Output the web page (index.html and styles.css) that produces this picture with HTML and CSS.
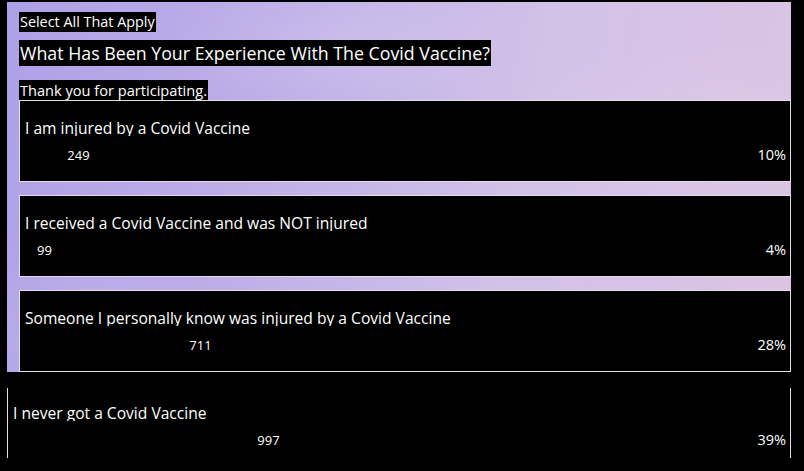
FILE: index.html
```html
<!DOCTYPE html>
<html lang="en">
<head>
  <meta charset="UTF-8" />
  <meta name="viewport" content="width=device-width, initial-scale=1.0" />
  <title>Covid Vaccine Poll</title>
  <link rel="stylesheet" href="styles.css">
</head>
<body>
  <div class="poll">
    <div class="poll-head">
      <span class="tag">Select All That Apply</span>
      <span class="question">What Has Been Your Experience With The Covid Vaccine?</span>
      <span class="note">Thank you for participating.</span>
    </div>
    <div class="answers">
      <div class="answer">
        <div class="answer-label">I am injured by a Covid Vaccine</div>
        <div class="answer-row">
          <span class="answer-bar" style="width:107px">249</span>
          <span class="answer-pct">10%</span>
        </div>
      </div>
      <div class="answer">
        <div class="answer-label">I received a Covid Vaccine and was NOT injured</div>
        <div class="answer-row">
          <span class="answer-bar" style="width:39px">99</span>
          <span class="answer-pct">4%</span>
        </div>
      </div>
      <div class="answer">
        <div class="answer-label">Someone I personally know was injured by a Covid Vaccine</div>
        <div class="answer-row">
          <span class="answer-bar" style="width:351px">711</span>
          <span class="answer-pct">28%</span>
        </div>
      </div>
    </div>
  </div>
  <div class="answer answer-loose">
    <div class="answer-label">I never got a Covid Vaccine</div>
    <div class="answer-row">
      <span class="answer-bar" style="width:511px">997</span>
      <span class="answer-pct">39%</span>
    </div>
  </div>
</body>
</html>
```

FILE: styles.css
```css
* { margin: 0; padding: 0; box-sizing: border-box; }
html, body {
  width: 100%; height: 100%; overflow: hidden;
  background: #000; color: #fff;
  font-family: 'Open Sans', 'Noto Sans', sans-serif;
}
body { padding: 2px 13px 0 7px; }

.poll {
  padding: 10px 0 0 12px;
  background:
    radial-gradient(ellipse 260px 90px at 330px 40px, rgba(255,255,255,0.12), transparent 70%),
    radial-gradient(ellipse 300px 120px at 700px 120px, rgba(255,255,255,0.08), transparent 70%),
    radial-gradient(ellipse 220px 140px at 60px 330px, rgba(255,255,255,0.10), transparent 70%),
    linear-gradient(100deg, #aea0e6 0%, #bfb0e8 35%, #d2c2e8 65%, #dcc3e3 100%);
}
.poll-head { display: flex; flex-direction: column; align-items: flex-start; }
.tag, .question, .note { background: #000; padding: 0 1px; white-space: nowrap; }
.tag { font-size: 14.4px; line-height: 20px; }
.question { margin-top: 8px; font-size: 17.8px; line-height: 26px; }
.note { margin-top: 14px; font-size: 14.6px; line-height: 20px; }

.answers { display: flex; flex-direction: column; gap: 13px; }
.answer {
  height: 82px; background: #000;
  border: 1px solid #e4dcea; padding: 17px 4px 0 5px;
}
.answer-label {
  height: 18px; overflow: hidden;
  font-size: 15.6px; line-height: 21px; white-space: nowrap;
}
.answer-row {
  display: flex; justify-content: space-between; align-items: flex-end;
  margin-top: 10px;
}
.answer-bar { text-align: center; font-size: 13px; line-height: 18px; }
.answer-pct { font-size: 14.5px; line-height: 18px; }

.answer-loose {
  margin-top: 16px; height: 70px; padding-top: 15px;
  border-top: 0; border-bottom: 0;
}
```
